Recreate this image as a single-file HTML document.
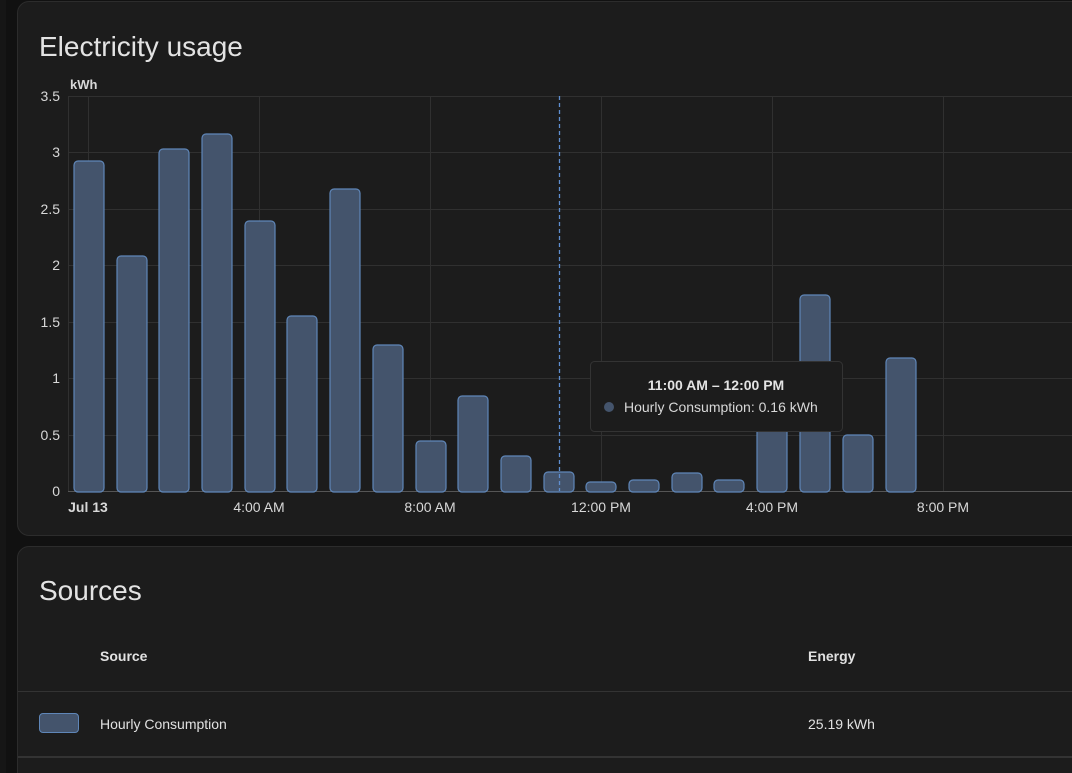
<!DOCTYPE html>
<html style="height:773px;overflow:hidden"><head><style>
body{margin:0;width:1072px;height:773px;background:#111;overflow:hidden;font-family:"Liberation Sans",sans-serif;position:relative}
.strip{position:absolute;left:0;top:0;width:6px;height:773px;background:#161616}
.card{position:absolute;left:17px;width:1080px;background:#1c1c1c;border:1px solid #2c2c2c;border-radius:12px;box-sizing:border-box}
h1{position:absolute;left:21px;margin:0;font-weight:400;font-size:28px;color:#e3e3e3}
.t{position:absolute;font-size:14px;color:#e1e1e1}
</style></head><body>
<div class="strip"></div>
<div class="card" style="top:1px;height:535px"><h1 style="top:29px">Electricity usage</h1></div>
<svg style="position:absolute;left:0;top:0" width="1072" height="535" font-family="Liberation Sans,sans-serif" font-size="14" fill="#d8d8d8">
<g stroke="#303030" stroke-width="1">
<line x1="68" y1="96.5" x2="1072" y2="96.5"/><line x1="68" y1="152.5" x2="1072" y2="152.5"/><line x1="68" y1="209.5" x2="1072" y2="209.5"/><line x1="68" y1="265.5" x2="1072" y2="265.5"/><line x1="68" y1="322.5" x2="1072" y2="322.5"/><line x1="68" y1="378.5" x2="1072" y2="378.5"/><line x1="68" y1="435.5" x2="1072" y2="435.5"/>
<line x1="68.5" y1="96" x2="68.5" y2="491"/><line x1="88.5" y1="96" x2="88.5" y2="491"/><line x1="259.5" y1="96" x2="259.5" y2="491"/><line x1="430.5" y1="96" x2="430.5" y2="491"/><line x1="601.5" y1="96" x2="601.5" y2="491"/><line x1="772.5" y1="96" x2="772.5" y2="491"/><line x1="943.5" y1="96" x2="943.5" y2="491"/>
</g>
<line x1="68" y1="491.5" x2="1072" y2="491.5" stroke="#555"/>
<g text-anchor="end"><text x="60" y="101">3.5</text><text x="60" y="157">3</text><text x="60" y="214">2.5</text><text x="60" y="270">2</text><text x="60" y="327">1.5</text><text x="60" y="383">1</text><text x="60" y="440">0.5</text><text x="60" y="496">0</text></g>
<text x="70" y="89" font-size="13" font-weight="bold">kWh</text>
<g text-anchor="middle"><text x="88" y="512" font-weight="bold">Jul 13</text><text x="259" y="512">4:00 AM</text><text x="430" y="512">8:00 AM</text><text x="601" y="512">12:00 PM</text><text x="772" y="512">4:00 PM</text><text x="943" y="512">8:00 PM</text></g>
<g fill="#44546c" stroke="#5f86b8" stroke-width="1.2">
<rect x="74" y="161" width="30" height="331" rx="4"/>
<rect x="117" y="256" width="30" height="236" rx="4"/>
<rect x="159" y="149" width="30" height="343" rx="4"/>
<rect x="202" y="134" width="30" height="358" rx="4"/>
<rect x="245" y="221" width="30" height="271" rx="4"/>
<rect x="287" y="316" width="30" height="176" rx="4"/>
<rect x="330" y="189" width="30" height="303" rx="4"/>
<rect x="373" y="345" width="30" height="147" rx="4"/>
<rect x="416" y="441" width="30" height="51" rx="4"/>
<rect x="458" y="396" width="30" height="96" rx="4"/>
<rect x="501" y="456" width="30" height="36" rx="4"/>
<rect x="544" y="472" width="30" height="20" rx="4"/>
<rect x="586" y="482" width="30" height="10" rx="4"/>
<rect x="629" y="480" width="30" height="12" rx="4"/>
<rect x="672" y="473" width="30" height="19" rx="4"/>
<rect x="714" y="480" width="30" height="12" rx="4"/>
<rect x="757" y="380" width="30" height="112" rx="4"/>
<rect x="800" y="295" width="30" height="197" rx="4"/>
<rect x="843" y="435" width="30" height="57" rx="4"/>
<rect x="886" y="358" width="30" height="134" rx="4"/>
</g>
<line x1="559.5" y1="96" x2="559.5" y2="491" stroke="#5f8fd0" stroke-width="1.3" stroke-dasharray="4,3"/>
<rect x="590.5" y="361.5" width="252" height="70" rx="4" fill="#1c1c1c" stroke="#333"/>
<text x="716" y="390" text-anchor="middle" font-weight="bold" fill="#e3e3e3">11:00 AM – 12:00 PM</text>
<circle cx="609" cy="407" r="5" fill="#44546c"/>
<text x="624" y="412" fill="#d8d8d8">Hourly Consumption: 0.16 kWh</text>
</svg>
<div class="card" style="top:546px;height:240px">
<h1 style="top:28px">Sources</h1>
<div class="t" style="left:82px;top:101px;font-weight:bold">Source</div>
<div class="t" style="left:790px;top:101px;font-weight:bold">Energy</div>
<div style="position:absolute;left:0;right:0;top:144px;border-top:1px solid #333"></div>
<div style="position:absolute;left:21px;top:166px;width:40px;height:20px;background:#44546c;border:1px solid #5f86b8;border-radius:4px;box-sizing:border-box"></div>
<div class="t" style="left:82px;top:169px">Hourly Consumption</div>
<div class="t" style="left:790px;top:169px">25.19 kWh</div>
<div style="position:absolute;left:0;right:0;top:209px;border-top:2px solid #333"></div>
</div>
</body></html>
